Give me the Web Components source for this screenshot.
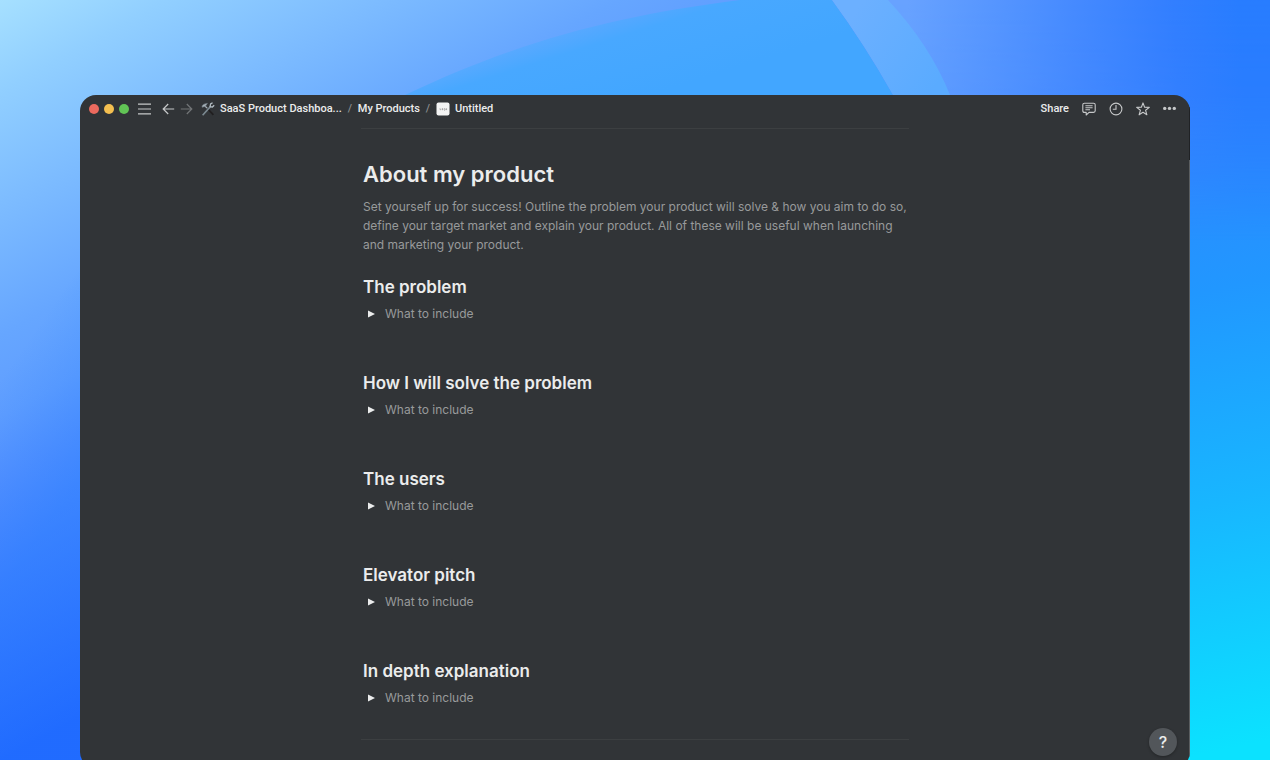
<!DOCTYPE html>
<html lang="en">
<head>
<meta charset="utf-8">
<meta name="viewport" content="width=device-width, initial-scale=1">
<title>Untitled</title>
<style>
  :root {
    --color-surface: #313437;
    --color-text: #ebecec;
    --color-muted: #989a9b;
    --color-icon: #c6c8c9;
    --color-rule: #3c3f41;
  }

  body {
    margin: 0;
    font-family: Inter, "Liberation Sans", sans-serif;
    color: var(--color-text);
  }
</style>
</head>
<body>
<desktop-wallpaper>
  <app-window>
    <app-toolbar slot="toolbar"></app-toolbar>
    <doc-page>
      <doc-intro>
        <span slot="title">About my product</span>
        Set yourself up for success! Outline the problem your product will solve &amp; how you aim to do so, define your target market and explain your product. All of these will be useful when launching and marketing your product.
      </doc-intro>
      <doc-section heading="The problem">What to include</doc-section>
      <doc-section heading="How I will solve the problem">What to include</doc-section>
      <doc-section heading="The users">What to include</doc-section>
      <doc-section heading="Elevator pitch">What to include</doc-section>
      <doc-section heading="In depth explanation">What to include</doc-section>
    </doc-page>
    <help-button slot="overlay"></help-button>
  </app-window>
</desktop-wallpaper>

<script>
/**
 * DesktopWallpaper
 * Full-window backdrop, the default slot holds the windows on it
 */
class DesktopWallpaper extends HTMLElement {
  constructor() {
    super();
    this.attachShadow({ mode: 'open' }).innerHTML = `
      <style>
        :host {
          display: flex;
          position: relative;
          box-sizing: border-box;
          height: 100vh;
          padding: 95px 80px 0;
          overflow: hidden;
        }

        .backdrop {
          position: absolute;
          inset: 0;
          width: 100%;
          height: 100%;
        }
      </style>
      <svg class="backdrop" viewBox="0 0 1270 760" preserveAspectRatio="none" aria-hidden="true">
        <defs>
          <linearGradient id="left" gradientUnits="userSpaceOnUse" x1="0" y1="0" x2="380" y2="700">
            <stop offset="0" stop-color="#a6e0ff"/>
            <stop offset=".1" stop-color="#91cfff"/>
            <stop offset=".37" stop-color="#66a6ff"/>
            <stop offset=".46" stop-color="#5f9dff"/>
            <stop offset=".53" stop-color="#5590ff"/>
            <stop offset=".66" stop-color="#3f7cff"/>
            <stop offset=".84" stop-color="#2160ff"/>
          </linearGradient>
          <linearGradient id="shade" gradientUnits="userSpaceOnUse" x1="0" y1="380" x2="100" y2="450">
            <stop offset="0" stop-color="#1f80ff" stop-opacity="0"/>
            <stop offset="1" stop-color="#1f80ff" stop-opacity=".35"/>
          </linearGradient>
          <linearGradient id="dome" gradientUnits="userSpaceOnUse" x1="620" y1="0" x2="650" y2="95">
            <stop offset="0" stop-color="#54acff" stop-opacity=".3"/>
            <stop offset=".35" stop-color="#48a8ff"/>
            <stop offset="1" stop-color="#42a6ff"/>
          </linearGradient>
          <linearGradient id="right" gradientUnits="userSpaceOnUse" x1="1120" y1="60" x2="1270" y2="740">
            <stop offset="0" stop-color="#3582ff"/>
            <stop offset=".35" stop-color="#2197ff"/>
            <stop offset=".65" stop-color="#18b6ff"/>
            <stop offset="1" stop-color="#0be2ff"/>
          </linearGradient>
          <linearGradient id="glow" gradientUnits="userSpaceOnUse" x1="910" y1="40" x2="1240" y2="20">
            <stop offset="0" stop-color="#68a2ff"/>
            <stop offset=".5" stop-color="#468aff"/>
            <stop offset=".8" stop-color="#327eff"/>
            <stop offset="1" stop-color="#287cff"/>
          </linearGradient>
          <linearGradient id="crescent" gradientUnits="userSpaceOnUse" x1="850" y1="20" x2="940" y2="80">
            <stop offset="0" stop-color="#6cb0ff"/>
            <stop offset="1" stop-color="#5aabff"/>
          </linearGradient>
          <linearGradient id="fade" x1="0" y1="0" x2="0" y2="1">
            <stop offset="0" stop-color="#fff"/>
            <stop offset=".4" stop-color="#ddd"/>
            <stop offset="1" stop-color="#000"/>
          </linearGradient>
          <mask id="top"><rect x="800" width="470" height="240" fill="url(#fade)"/></mask>
        </defs>
        <rect width="1270" height="760" fill="url(#left)"/>
        <rect width="200" height="760" fill="url(#shade)"/>
        <path d="M405 95C520 40 620 15 740 0H900V95Z" fill="url(#dome)"/>
        <path d="M832 0H1270V760H1100C1060 500 1010 260 893 95Q865 45 832 0Z" fill="url(#right)"/>
        <path d="M832 0H1270V240H960Q930 150 893 95Q865 45 832 0Z" fill="url(#glow)" mask="url(#top)"/>
        <path d="M832 0H888Q930 45 950 95H893Q865 45 832 0Z" fill="url(#crescent)"/>
      </svg>
      <slot></slot>
    `;
  }
}

/**
 * AppWindow
 * Slots: toolbar, default (page), overlay (floating controls)
 */
class AppWindow extends HTMLElement {
  constructor() {
    super();
    this.attachShadow({ mode: 'open' }).innerHTML = `
      <style>
        :host {
          display: flex;
          flex-direction: column;
          position: relative;
          flex: 1;
          min-width: 0;
          margin-bottom: -8px;
          border-radius: 16px;
          background: var(--color-surface);
          overflow: hidden;
        }

        /* scroll track along the right edge */
        .track {
          position: absolute;
          inset: 12px 0 0 auto;
          width: 1px;
          background: linear-gradient(#202225 53px, #5b5e60 53px);
        }
      </style>
      <slot name="toolbar"></slot>
      <slot></slot>
      <div class="track"></div>
      <slot name="overlay"></slot>
    `;
  }
}

/**
 * AppToolbar
 * Window controls, breadcrumb and page actions
 */
class AppToolbar extends HTMLElement {
  constructor() {
    super();
    this.attachShadow({ mode: 'open' }).innerHTML = `
      <style>
        :host {
          display: flex;
          align-items: center;
          justify-content: space-between;
          height: 27px;
          padding: 0 13px 0 9px;
          font-family: Roboto, Inter, sans-serif;
          font-size: 11px;
          font-weight: 500;
          line-height: 16px;
        }

        nav, .controls, .lights, .actions, ol, li, a {
          display: flex;
          align-items: center;
        }

        button {
          display: flex;
          padding: 0;
          border: 0;
          background: none;
          color: var(--color-icon);
          font: inherit;
          cursor: pointer;
        }

        svg {
          display: block;
          fill: none;
          stroke: currentColor;
        }

        a {
          gap: 5px;
          color: inherit;
          text-decoration: none;
          white-space: nowrap;
        }

        ol {
          margin: 0;
          padding: 0;
          list-style: none;
        }

        li + li::before {
          content: "/";
          width: 16px;
          text-align: center;
          color: #8b8d8f;
        }

        .controls { gap: 9px; margin-right: 8px; }
        .lights { gap: 5px; }
        .lights button { width: 10px; height: 10px; border-radius: 50%; }
        .close { background: #ec6a5e; }
        .minimize { background: #f4bf50; }
        .zoom { background: #61c455; }
        .history { display: flex; gap: 5px; margin-left: 2px; }
        .history button:disabled { color: #727577; }
        .actions { gap: 13px; }
        .actions .share { color: var(--color-text); }
      </style>
      <nav aria-label="Breadcrumb">
        <div class="controls">
          <div class="lights">
            <button class="close" aria-label="Close"></button>
            <button class="minimize" aria-label="Minimize"></button>
            <button class="zoom" aria-label="Zoom"></button>
          </div>
          <button aria-label="Menu">
            <svg width="13" height="12" viewBox="0 0 13 12" stroke-width="1.2"><path d="M0 1.2H13M0 6H13M0 10.8H13"/></svg>
          </button>
          <div class="history">
            <button aria-label="Back">
              <svg width="13" height="12" viewBox="0 0 13 12" stroke-width="1.2"><path d="M12.2 6H1.2M6.2 1L1.2 6L6.2 11"/></svg>
            </button>
            <button aria-label="Forward" disabled>
              <svg width="13" height="12" viewBox="0 0 13 12" stroke-width="1.2"><path d="M.8 6H11.8M6.8 1L11.8 6L6.8 11"/></svg>
            </button>
          </div>
        </div>
        <ol>
          <li>
            <a href="#dashboard">
              <svg width="14" height="14" viewBox="0 0 14 14">
                <path d="M5 5L12.4 12.8" stroke="#211f20" stroke-width="1.8"/>
                <path d="M4.2 4.2L6.4 6.4" stroke="#a7b2b9" stroke-width="1.3"/>
                <path d="M1 5.2Q.8 1.8 6.4 1.4L4.2 4.4Z" fill="#a4afb7" stroke="#79858d" stroke-width=".6"/>
                <path d="M1.6 13.2L9.4 4.6" stroke="#7b8991" stroke-width="1.6"/>
                <path d="M11.6.8L9.6 2L9.1 4.7L11.4 5L13.2 3.2" stroke="#b3bdc3" stroke-width="1.3"/>
              </svg>
              <span>SaaS Product Dashboa...</span>
            </a>
          </li>
          <li><a href="#products">My Products</a></li>
          <li>
            <a href="#untitled" aria-current="page">
              <svg width="14" height="14" viewBox="0 0 14 14">
                <rect x=".5" y=".5" width="13" height="13" rx="2" fill="#f3f3f3" stroke="none"/>
                <path d="M4 6.2V7.7H5M6 6.7H7V7.7H6ZM8 6.7H9V8.2H8M10 6.7H10.6V7.7H10Z" stroke="#777" stroke-width=".5"/>
              </svg>
              <span>Untitled</span>
            </a>
          </li>
        </ol>
      </nav>
      <div class="actions">
        <button class="share">Share</button>
        <button aria-label="Comments">
          <svg width="14" height="14" viewBox="0 0 14 14" stroke-width="1.1" stroke-linejoin="round"><path d="M2.4 1.2H11.6Q13.2 1.2 13.2 2.8V8.8Q13.2 10.4 11.6 10.4H7L4.2 13V10.4H2.4Q.8 10.4.8 8.8V2.8Q.8 1.2 2.4 1.2ZM3.4 3.8H10.6M3.4 5.8H10.6M3.4 7.8H8"/></svg>
        </button>
        <button aria-label="Updates">
          <svg width="14" height="14" viewBox="0 0 14 14" stroke-width="1.1"><circle cx="7" cy="7" r="5.9"/><path d="M7 3V7.3H3.8"/></svg>
        </button>
        <button aria-label="Favorite">
          <svg width="14" height="14" viewBox="0 0 14 14" stroke-width="1.1" stroke-linejoin="round"><path d="M7 .9L8.6 5.3L13.3 5.4L9.6 8.3L10.9 12.8L7 10.2L3.1 12.8L4.4 8.3L.7 5.4L5.4 5.3Z"/></svg>
        </button>
        <button aria-label="More">
          <svg width="14" height="14" viewBox="0 0 14 14"><g fill="currentColor" stroke="none"><circle cx="1.7" cy="6.4" r="1.7"/><circle cx="6.5" cy="6.4" r="1.7"/><circle cx="11.3" cy="6.4" r="1.7"/></g></svg>
        </button>
      </div>
    `;
  }
}

/**
 * DocPage
 * Centered text column between two rules
 */
class DocPage extends HTMLElement {
  constructor() {
    super();
    this.attachShadow({ mode: 'open' }).innerHTML = `
      <style>
        :host {
          display: block;
          box-sizing: border-box;
          width: 100%;
          max-width: 548px;
          margin: 6px auto 0;
        }

        hr {
          margin: 0;
          border: 0;
          border-top: 1px solid var(--color-rule);
        }

        main {
          display: flex;
          flex-direction: column;
          gap: 47px;
          padding: 30px 2px 31px;
        }
      </style>
      <hr>
      <main><slot></slot></main>
      <hr>
    `;
  }
}

/**
 * DocIntro
 * Slots: title, default (paragraph)
 */
class DocIntro extends HTMLElement {
  constructor() {
    super();
    this.attachShadow({ mode: 'open' }).innerHTML = `
      <style>
        :host {
          display: block;
          margin-bottom: -26px;
        }

        h1 {
          margin: 0 0 8px;
          font-size: 22px;
          font-weight: 600;
          line-height: 30px;
        }

        p {
          margin: 0;
          font-size: 12px;
          line-height: 19px;
          color: var(--color-muted);
        }
      </style>
      <h1><slot name="title"></slot></h1>
      <p><slot></slot></p>
    `;
  }
}

/**
 * DocSection
 * Heading from the attribute, toggle label from the default slot
 */
class DocSection extends HTMLElement {
  constructor() {
    super();
    this.attachShadow({ mode: 'open' }).innerHTML = `
      <style>
        :host { display: block; }

        h2 {
          margin: 0 0 5px;
          font-size: 17px;
          font-weight: 600;
          line-height: 24px;
        }

        summary {
          display: flex;
          align-items: center;
          gap: 10px;
          padding-left: 5px;
          font-size: 12px;
          line-height: 20px;
          color: var(--color-muted);
          list-style: none;
          cursor: pointer;
        }

        svg { fill: var(--color-text); }
        details[open] svg { transform: rotate(90deg); }
      </style>
      <h2></h2>
      <details>
        <summary>
          <svg width="7" height="8" viewBox="0 0 7 8" aria-hidden="true"><path d="M0 .5L7 4L0 7.5Z"/></svg>
          <span><slot></slot></span>
        </summary>
      </details>
    `;
  }

  connectedCallback() {
    this.shadowRoot.querySelector('h2').textContent = this.getAttribute('heading');
  }
}

/**
 * HelpButton
 * Floats over the bottom right corner of the window
 */
class HelpButton extends HTMLElement {
  constructor() {
    super();
    this.attachShadow({ mode: 'open' }).innerHTML = `
      <style>
        :host {
          display: block;
          position: absolute;
          right: 13px;
          bottom: 12px;
        }

        button {
          width: 28px;
          height: 28px;
          padding: 0;
          border: 0;
          border-radius: 50%;
          background: #52565a;
          box-shadow: 0 1px 3px rgba(0, 0, 0, .3);
          color: var(--color-text);
          font: inherit;
          font-size: 16px;
          font-weight: 500;
          cursor: pointer;
        }
      </style>
      <button title="Help">?</button>
    `;
  }
}

// Register custom elements
customElements.define('desktop-wallpaper', DesktopWallpaper);
customElements.define('app-window', AppWindow);
customElements.define('app-toolbar', AppToolbar);
customElements.define('doc-page', DocPage);
customElements.define('doc-intro', DocIntro);
customElements.define('doc-section', DocSection);
customElements.define('help-button', HelpButton);
</script>
</body>
</html>
